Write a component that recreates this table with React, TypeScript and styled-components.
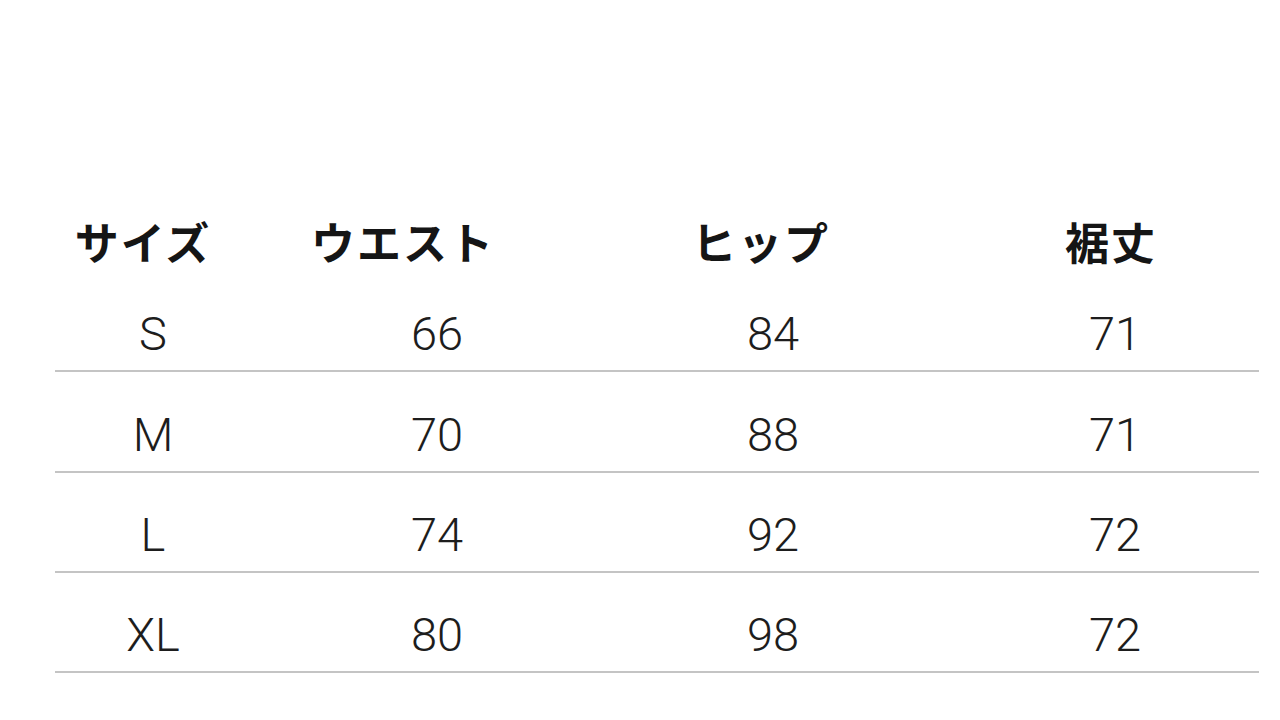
import React from "react";
import styled, { createGlobalStyle } from "styled-components";

const Global = createGlobalStyle`
  html, body { margin: 0; padding: 0; background: #ffffff; }
  body { width: 1280px; height: 720px; overflow: hidden; }
`;

const Page = styled.div`
  width: 1280px;
  height: 720px;
  background: #ffffff;
  padding: 195px 0 0 55px;
  box-sizing: border-box;
`;

const Table = styled.div`
  width: 1204px;
  display: flex;
  flex-direction: column;
`;

const COLS = "190px 384px 288px 342px";

const HeadRow = styled.div`
  display: grid;
  grid-template-columns: ${COLS};
  height: 77px;
  align-items: start;
`;

/* $shift > 0 moves the text left of the column centre, < 0 moves it right */
const HeadCell = styled.div<{ $shift: number }>`
  padding-top: 24px;
  text-align: center;
  font-family: "Noto Sans CJK JP", "Noto Sans", sans-serif;
  font-weight: 700;
  font-size: 44px;
  line-height: 44px;
  color: #151515;
  letter-spacing: 2px;
  padding-right: ${(p) => (p.$shift > 0 ? p.$shift * 2 : 0)}px;
  padding-left: ${(p) => (p.$shift < 0 ? -p.$shift * 2 : 0)}px;
`;

const Row = styled.div`
  display: grid;
  grid-template-columns: ${COLS};
  height: 84px;
  align-items: end;
  border-bottom: 2px solid #c4c4c4;
  padding-bottom: 14px;
  box-sizing: content-box;
  &:nth-of-type(3) {
    height: 85px;
  }
`;

/* $shift > 0 moves the text right of the column centre */
const Cell = styled.div<{ $shift: number }>`
  text-align: center;
  font-family: Roboto, "Liberation Sans", sans-serif;
  font-weight: 300;
  font-size: 47px;
  line-height: 44px;
  color: #1d1d1d;
  padding-left: ${(p) => (p.$shift > 0 ? p.$shift * 2 : 0)}px;
  padding-right: ${(p) => (p.$shift < 0 ? -p.$shift * 2 : 0)}px;
`;

const headers = ["サイズ", "ウエスト", "ヒップ", "裾丈"];
const headShift = [7, 34, 12, -23];
const cellShift = [3, 0, 0, 27];
const rows = [
  ["S", "66", "84", "71"],
  ["M", "70", "88", "71"],
  ["L", "74", "92", "72"],
  ["XL", "80", "98", "72"],
];

export default function App() {
  return (
    <>
      <Global />
      <Page>
        <Table>
          <HeadRow>
            {headers.map((h, i) => (
              <HeadCell key={h} $shift={headShift[i]}>
                {h}
              </HeadCell>
            ))}
          </HeadRow>
          {rows.map((r) => (
            <Row key={r[0]}>
              {r.map((v, i) => (
                <Cell key={i} $shift={cellShift[i]}>
                  {v}
                </Cell>
              ))}
            </Row>
          ))}
        </Table>
      </Page>
    </>
  );
}
